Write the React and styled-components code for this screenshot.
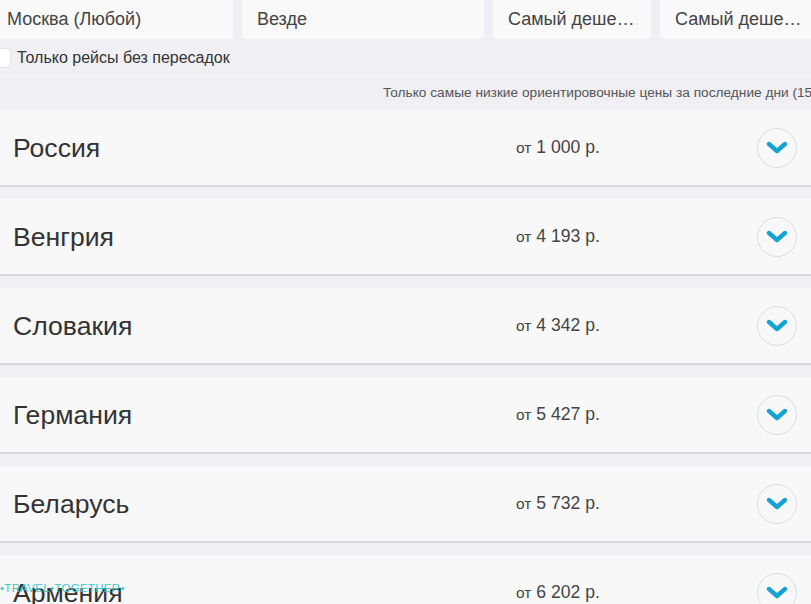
import React from 'react';
import styled, { createGlobalStyle } from 'styled-components';

const GlobalStyle = createGlobalStyle`
  html, body {
    margin: 0;
    padding: 0;
    background: #f0eff3;
    font-family: "Liberation Sans", Arial, sans-serif;
    overflow: hidden;
  }
`;

const Page = styled.div`
  width: 811px;
  height: 604px;
  overflow: hidden;
  position: relative;
`;

const Filters = styled.div`
  display: grid;
  grid-template-columns: 241px 242px 158px 170px;
  gap: 9px;
  margin-left: -8px;
`;

const FilterBox = styled.div`
  height: 39px;
  background: #f9f9fa;
  border-radius: 0 0 4px 4px;
  display: flex;
  align-items: center;
  padding-left: 15px;
  font-size: 18px;
  color: #444;
  white-space: nowrap;
  overflow: hidden;
`;

const CheckRow = styled.label`
  display: flex;
  align-items: center;
  gap: 6px;
  height: 20px;
  margin: 9px 0 0 -8px;
  font-size: 16px;
  color: #333;
`;

const CheckBox = styled.span`
  width: 17px;
  height: 18px;
  background: #fff;
  border: 1px solid #e2e2e6;
  border-radius: 4px;
`;

const Note = styled.div`
  margin-top: 8px;
  border-top: 1px solid #f8f8fa;
  padding: 8px 0 0 383px;
  height: 25px;
  font-size: 13.7px;
  color: #555;
  white-space: nowrap;
  overflow: hidden;
`;

const List = styled.div`
  display: flex;
  flex-direction: column;
  gap: 12px;
`;

const Card = styled.div`
  height: 75px;
  background: #f8f8f9;
  border-bottom: 2px solid #d9d8df;
  display: grid;
  grid-template-columns: 503px 1fr 40px;
  align-items: center;
  padding: 0 14px 0 13px;
`;

const Country = styled.div`
  font-size: 26.6px;
  color: #333;
  padding-top: 1px;
`;

const Price = styled.div`
  font-size: 17.6px;
  color: #444;
  span {
    font-size: 15.5px;
  }
`;

const Toggle = styled.div`
  width: 38px;
  height: 38px;
  border: 1px solid #dcdce2;
  border-radius: 50%;
  display: flex;
  align-items: center;
  justify-content: center;
`;

const Watermark = styled.div`
  position: absolute;
  left: 0;
  top: 582px;
  font-size: 11.5px;
  letter-spacing: 0.3px;
  color: #3cc6c8;
`;

const countries = [
  ['Россия', '1 000'],
  ['Венгрия', '4 193'],
  ['Словакия', '4 342'],
  ['Германия', '5 427'],
  ['Беларусь', '5 732'],
  ['Армения', '6 202'],
];

function Chevron() {
  return (
    <svg width="22" height="14" viewBox="0 0 22 14">
      <polyline points="3,3 11,10 19,3" fill="none" stroke="#17a2d4" strokeWidth="4.4" strokeLinecap="round" strokeLinejoin="round" />
    </svg>
  );
}

export default function App() {
  return (
    <Page>
      <GlobalStyle />
      <Filters>
        <FilterBox>Москва (Любой)</FilterBox>
        <FilterBox>Везде</FilterBox>
        <FilterBox>Самый деше…</FilterBox>
        <FilterBox>Самый деше…</FilterBox>
      </Filters>
      <CheckRow>
        <CheckBox />
        Только рейсы без пересадок
      </CheckRow>
      <Note>Только самые низкие ориентировочные цены за последние дни (15 дней)</Note>
      <List>
        {countries.map(([name, price]) => (
          <Card key={name}>
            <Country>{name}</Country>
            <Price><span>от</span> {price} р.</Price>
            <Toggle><Chevron /></Toggle>
          </Card>
        ))}
      </List>
      <Watermark>•TRAVEL•TOGETHER•</Watermark>
    </Page>
  );
}
